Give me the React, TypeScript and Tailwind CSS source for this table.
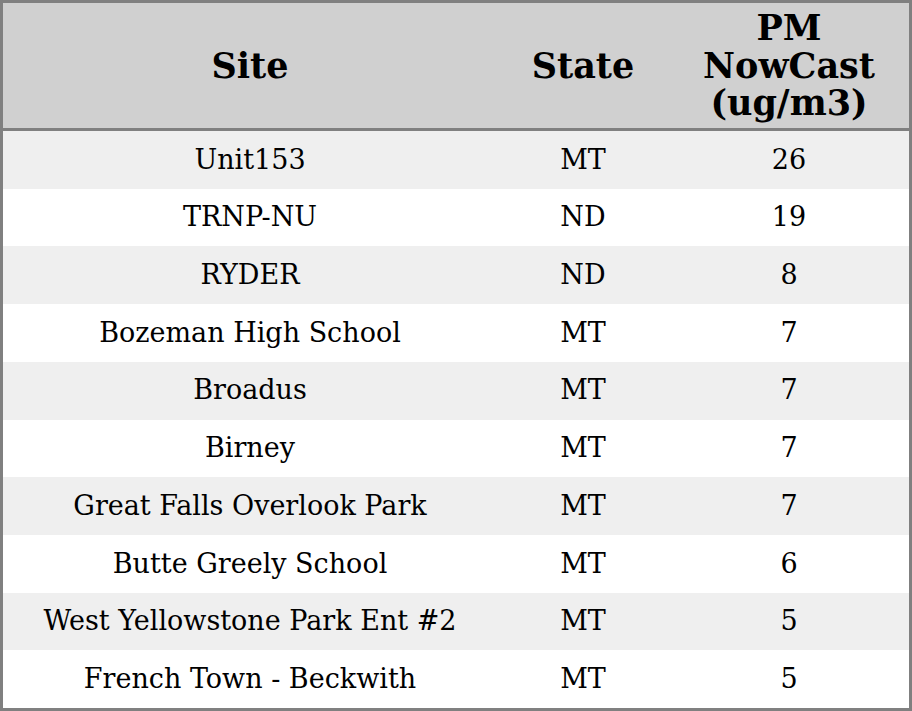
const rows: [string, string, string][] = [
  ['Unit153', 'MT', '26'],
  ['TRNP-NU', 'ND', '19'],
  ['RYDER', 'ND', '8'],
  ['Bozeman High School', 'MT', '7'],
  ['Broadus', 'MT', '7'],
  ['Birney', 'MT', '7'],
  ['Great Falls Overlook Park', 'MT', '7'],
  ['Butte Greely School', 'MT', '6'],
  ['West Yellowstone Park Ent #2', 'MT', '5'],
  ['French Town - Beckwith', 'MT', '5'],
];

export default function App() {
  return (
    <div className="w-[912px] h-[711px] bg-white font-['DejaVu_Serif',serif] text-black">
      <div className="h-[711px] border-[3px] border-[#808080] flex flex-col">
        {/* Header */}
        <div className="grid grid-cols-[494px_172px_240px] h-[128px] bg-[#d0d0d0] border-b-[3px] border-[#808080] text-[35px] font-bold leading-[37.5px] text-center">
          <div className="flex items-center justify-center">Site</div>
          <div className="flex items-center justify-center">State</div>
          <div className="flex items-center justify-center">
            PM
            <br />
            NowCast
            <br />
            (ug/m3)
          </div>
        </div>

        {/* Body */}
        <div className="flex-1 flex flex-col">
          {rows.map(([site, state, value], i) => (
            <div
              key={site}
              className={`flex-1 grid grid-cols-[494px_172px_240px] items-center text-center text-[27px] ${
                i % 2 === 0 ? 'bg-[#efefef]' : 'bg-white'
              }`}
            >
              <div>{site}</div>
              <div>{state}</div>
              <div>{value}</div>
            </div>
          ))}
        </div>
      </div>
    </div>
  );
}
